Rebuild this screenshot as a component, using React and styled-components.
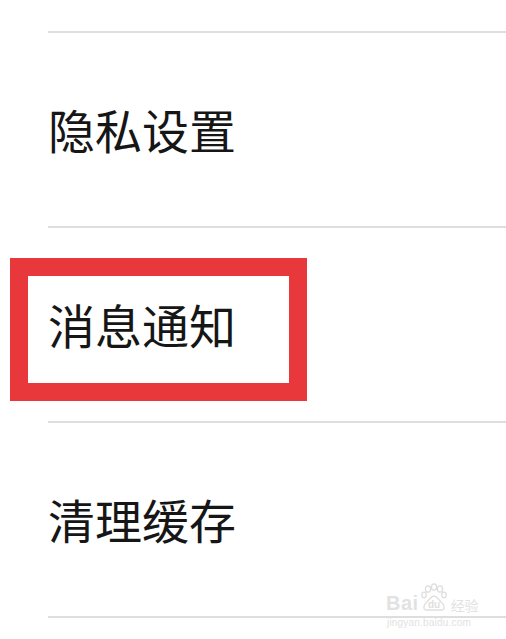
import React from 'react';
import styled, { createGlobalStyle } from 'styled-components';

const GlobalStyle = createGlobalStyle`
  html, body {
    margin: 0;
    padding: 0;
    background: #ffffff;
  }
  body {
    font-family: "Noto Sans CJK SC", "Noto Sans", sans-serif;
  }
`;

const Page = styled.div`
  position: relative;
  width: 506px;
  height: 639px;
  overflow: hidden;
  background: #ffffff;
  padding-top: 31px;
  box-sizing: border-box;
`;

const List = styled.div`
  display: flex;
  flex-direction: column;
  padding-left: 48px;
`;

const Row = styled.div`
  display: flex;
  align-items: center;
  height: ${(p) => (p.$last ? 2 : 195)}px;
  box-sizing: border-box;
  border-top: 2px solid #dedede;
`;

const Label = styled.span`
  font-family: "Noto Sans CJK SC", sans-serif;
  font-size: 47px;
  color: #161616;
  line-height: 1;
  margin-top: -2px;
`;

// annotation box drawn over the screenshot
const Highlight = styled.div`
  position: absolute;
  left: 10px;
  top: 258px;
  width: 297px;
  height: 143px;
  box-sizing: border-box;
  border: 18px solid #e9383b;
`;

const Watermark = styled.div`
  position: absolute;
  left: 386px;
  top: 583px;
  display: flex;
  flex-direction: column;
  align-items: flex-start;
  color: #e2e2e2;
  text-shadow: 0 0 1px #ffffff;
`;

const Brand = styled.div`
  display: flex;
  align-items: flex-end;
  gap: 2px;
  font-family: "Liberation Sans", Arial, sans-serif;
`;

const BrandText = styled.span`
  font-size: 20px;
  font-weight: bold;
  line-height: 1;
  letter-spacing: 0.5px;
`;

const CnText = styled.span`
  font-family: "Noto Sans CJK SC", sans-serif;
  font-size: 14px;
  line-height: 1;
  margin-left: 2px;
  margin-bottom: 1px;
`;

const Url = styled.span`
  font-family: "Liberation Sans", Arial, sans-serif;
  font-size: 10px;
  line-height: 1;
  margin-top: 5px;
  margin-left: 1px;
  letter-spacing: 0.2px;
`;

const items = ['隐私设置', '消息通知', '清理缓存'];

function Paw() {
  return (
    <svg width="26" height="30" viewBox="0 0 26 30" fill="none" stroke="#dedede" strokeWidth="1.3">
      <ellipse cx="7" cy="6" rx="2.6" ry="3.2" />
      <ellipse cx="13" cy="4" rx="2.6" ry="3.2" />
      <ellipse cx="19" cy="6" rx="2.6" ry="3.2" />
      <ellipse cx="23" cy="12" rx="2.2" ry="2.8" />
      <ellipse cx="3" cy="12" rx="2.2" ry="2.8" />
      <path d="M5 27 C2 27 2 22 6 19 C9 16 10 13 13 13 C16 13 17 16 20 19 C24 22 24 27 21 27 C17 27 9 27 5 27 Z" />
      <text x="13" y="25" textAnchor="middle" fontFamily="Liberation Sans, Arial, sans-serif" fontSize="10" fontWeight="bold" fill="#dedede" stroke="none">du</text>
    </svg>
  );
}

export default function App() {
  return (
    <Page>
      <GlobalStyle />
      <List>
        {items.map((t) => (
          <Row key={t}>
            <Label>{t}</Label>
          </Row>
        ))}
        <Row $last />
      </List>
      <Highlight />
      <Watermark>
        <Brand>
          <BrandText>Bai</BrandText>
          <Paw />
          <CnText>经验</CnText>
        </Brand>
        <Url>jingyan.baidu.com</Url>
      </Watermark>
    </Page>
  );
}
